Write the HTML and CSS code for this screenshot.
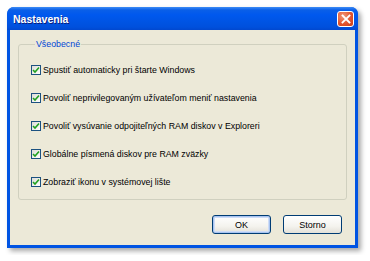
FILE: index.html
```html
<!DOCTYPE html>
<html lang="sk">
<head>
    <meta charset="UTF-8">
    <title>Nastavenia</title>
    <link rel="stylesheet" href="styles.css">
</head>
<body>
    <div class="window">
        <div class="titlebar">
            <span class="title">Nastavenia</span>
            <button class="close" aria-label="Zavrieť">
                <svg width="10" height="10" viewBox="0 0 10 10">
                    <path d="M1.5 1.5 L8.5 8.5 M8.5 1.5 L1.5 8.5" stroke="#fff" stroke-width="1.8" stroke-linecap="square"/>
                </svg>
            </button>
        </div>
        <div class="content">
            <fieldset class="group">
                <legend>Všeobecné</legend>
                <label class="check"><span class="box"><svg width="8" height="8" viewBox="0 0 8 8"><path d="M1 4 L3 6 L7 1.5" fill="none" stroke="#21a121" stroke-width="1.6"/></svg></span>Spustiť automaticky pri štarte Windows</label>
                <label class="check"><span class="box"><svg width="8" height="8" viewBox="0 0 8 8"><path d="M1 4 L3 6 L7 1.5" fill="none" stroke="#21a121" stroke-width="1.6"/></svg></span>Povoliť neprivilegovaným užívateľom meniť nastavenia</label>
                <label class="check"><span class="box"><svg width="8" height="8" viewBox="0 0 8 8"><path d="M1 4 L3 6 L7 1.5" fill="none" stroke="#21a121" stroke-width="1.6"/></svg></span>Povoliť vysúvanie odpojiteľných RAM diskov v Exploreri</label>
                <label class="check"><span class="box"><svg width="8" height="8" viewBox="0 0 8 8"><path d="M1 4 L3 6 L7 1.5" fill="none" stroke="#21a121" stroke-width="1.6"/></svg></span>Globálne písmená diskov pre RAM zväzky</label>
                <label class="check"><span class="box"><svg width="8" height="8" viewBox="0 0 8 8"><path d="M1 4 L3 6 L7 1.5" fill="none" stroke="#21a121" stroke-width="1.6"/></svg></span>Zobraziť ikonu v systémovej lište</label>
            </fieldset>
            <div class="buttons">
                <button class="btn default">OK</button>
                <button class="btn">Storno</button>
            </div>
        </div>
    </div>
</body>
</html>
```

FILE: styles.css
```css
body {
    margin: 0;
    padding: 7px;
    background: #fff;
    font-family: "Liberation Sans", Arial, sans-serif;
    font-size: 8.8px;
}
.window {
    width: 351px;
    height: 241px;
    box-sizing: border-box;
    display: flex;
    flex-direction: column;
    border-radius: 7px 7px 0 0;
    background: #0054e3;
    box-shadow: 3px 3px 5px rgba(0,0,0,0.35);
}
.titlebar {
    height: 23px;
    display: flex;
    align-items: center;
    justify-content: space-between;
    padding: 0 4px 0 6px;
    border-radius: 7px 7px 0 0;
    background: linear-gradient(#3d8cf5 0, #0a5fe8 3px, #0058ee 8px, #0054e3 15px, #0050dd 20px, #0148cf 23px);
}
.title {
    color: #fff;
    font-weight: bold;
    font-size: 10.5px;
    text-shadow: 1px 1px 0 #0a1e7d;
}
.close {
    width: 17px;
    height: 16px;
    padding: 0;
    border: 1px solid #fff;
    border-radius: 3px;
    background: radial-gradient(circle at 35% 30%, #f29a7a, #e2542e 55%, #c83c14);
    display: flex;
    align-items: center;
    justify-content: center;
}
.content {
    flex: 1;
    margin: 0 3px 3px 3px;
    background: #ece9d8;
    display: flex;
    flex-direction: column;
    padding: 9px 8px 11px 8px;
}
.group {
    margin: 0;
    padding: 7px 0 2px 12px;
    border: 1px solid #d0d0bf;
    border-radius: 3px;
    height: 161px;
    box-sizing: border-box;
}
.group legend {
    color: #0046d5;
    padding: 0 1px;
    margin-left: 4px;
}
.check {
    display: flex;
    align-items: center;
    height: 28px;
    color: #000;
}
.box {
    width: 8px;
    height: 8px;
    border: 1px solid #1c5180;
    background: linear-gradient(135deg, #dcdcd7, #fff);
    margin-right: 2px;
    display: flex;
    align-items: center;
    justify-content: center;
}
.buttons {
    margin-top: auto;
    display: flex;
    justify-content: flex-end;
    gap: 12px;
    padding-right: 5px;
}
.btn {
    width: 59px;
    height: 19px;
    padding: 0;
    font-family: "Liberation Sans", Arial, sans-serif;
    font-size: 9px;
    color: #000;
    border: 1px solid #003c74;
    border-radius: 3px;
    background: linear-gradient(#fff, #f4f3ee 60%, #e3e1d8);
}
.btn.default {
    box-shadow: inset 0 0 0 1px #a8c4f0, inset 0 0 0 2px #cfdcf6;
}
```
